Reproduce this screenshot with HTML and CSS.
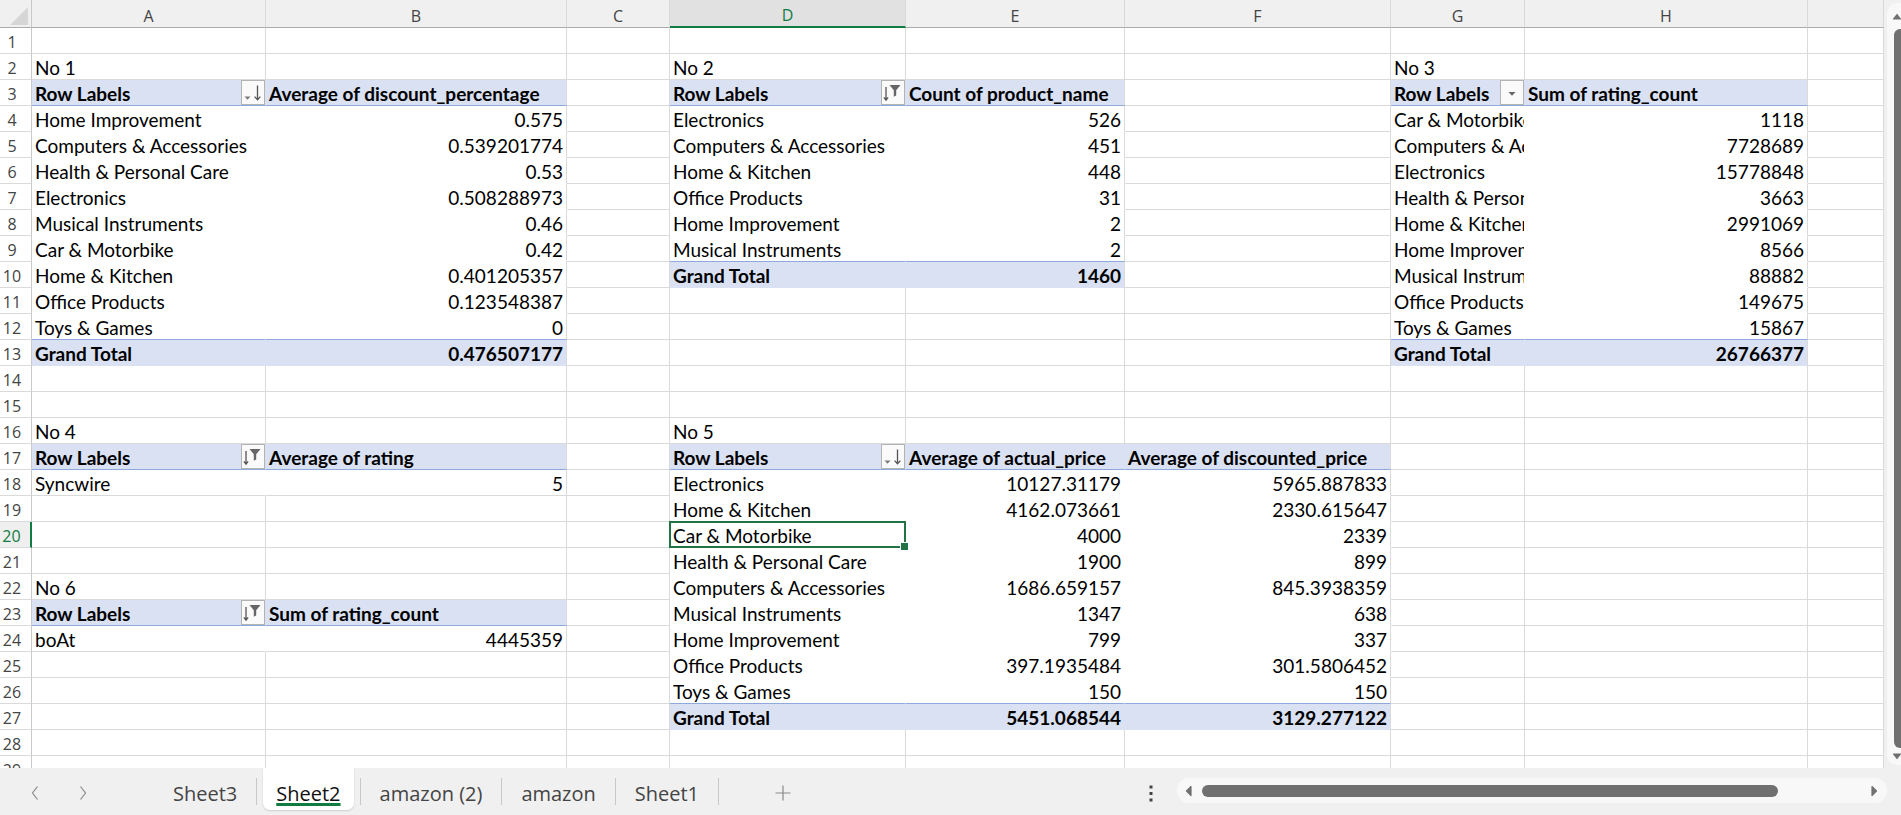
FILE: index.html
```html
<!DOCTYPE html>
<html lang="en">
<head>
<meta charset="utf-8">
<title>Sheet2</title>
<link rel="stylesheet" href="styles.css">
</head>
<body>
<div class="app">
  <div class="sheet">
    <div class="grid">
      <table class="cells">
        <thead>
          <tr>
            <th class="corner"><svg width="31" height="27" viewBox="0 0 31 27"><path d="M10 25H28V7Z" fill="#d6d6d6"/></svg></th>
            <th class="wA">A</th><th class="wB">B</th><th class="wC">C</th><th class="wD cur">D</th><th class="wE">E</th><th class="wF">F</th><th class="wG">G</th><th class="wH">H</th><th class="wI"></th>
          </tr>
        </thead>
        <tbody>
          <tr><th>1</th><td></td><td></td><td></td><td></td><td></td><td></td><td></td><td></td><td></td></tr>
          <tr><th>2</th><td>No 1</td><td></td><td></td><td>No 2</td><td></td><td></td><td>No 3</td><td></td><td></td></tr>
          <tr><th>3</th>
            <td class="h hi rl"><div class="lbl"><span>Row Labels</span><span class="fb"><svg viewBox="0 0 22 23"><path d="M2.5 15.5h6l-3 3.2z" fill="#7a7a7a"/><path d="M15.5 4.5v14M12.6 15.6l2.9 3.1 2.9-3.1" stroke="#555" stroke-width="1.3" fill="none"/></svg></span></div></td>
            <td class="h">Average of discount_percentage</td>
            <td></td>
            <td class="h hi rl"><div class="lbl"><span>Row Labels</span><span class="fb"><svg viewBox="0 0 22 23"><path d="M4 6v13M1.9 16.4l2.1 2.7 2.1-2.7" stroke="#555" stroke-width="1.3" fill="none"/><path d="M7.5 4h11l-4.3 5.2v5.3l-2.4 1.2v-6.5z" fill="#666"/></svg></span></div></td>
            <td class="h">Count of product_name</td>
            <td></td>
            <td class="h hi rl"><div class="lbl"><span>Row Labels</span><span class="fb"><svg viewBox="0 0 22 23"><path d="M7.5 11h7l-3.5 3.8z" fill="#666"/></svg></span></div></td>
            <td class="h">Sum of rating_count</td>
            <td></td>
          </tr>
          <tr><th>4</th><td class="p pi">Home Improvement</td><td class="p n">0.575</td><td></td><td class="p pi">Electronics</td><td class="p n">526</td><td></td><td class="p pi">Car &amp; Motorbike</td><td class="p n">1118</td><td></td></tr>
          <tr><th>5</th><td class="p pi">Computers &amp; Accessories</td><td class="p n">0.539201774</td><td></td><td class="p pi">Computers &amp; Accessories</td><td class="p n">451</td><td></td><td class="p pi">Computers &amp; Accessories</td><td class="p n">7728689</td><td></td></tr>
          <tr><th>6</th><td class="p pi">Health &amp; Personal Care</td><td class="p n">0.53</td><td></td><td class="p pi">Home &amp; Kitchen</td><td class="p n">448</td><td></td><td class="p pi">Electronics</td><td class="p n">15778848</td><td></td></tr>
          <tr><th>7</th><td class="p pi">Electronics</td><td class="p n">0.508288973</td><td></td><td class="p pi">Office Products</td><td class="p n">31</td><td></td><td class="p pi">Health &amp; Personal Care</td><td class="p n">3663</td><td></td></tr>
          <tr><th>8</th><td class="p pi">Musical Instruments</td><td class="p n">0.46</td><td></td><td class="p pi">Home Improvement</td><td class="p n">2</td><td></td><td class="p pi">Home &amp; Kitchen</td><td class="p n">2991069</td><td></td></tr>
          <tr><th>9</th><td class="p pi">Car &amp; Motorbike</td><td class="p n">0.42</td><td></td><td class="p pi pa">Musical Instruments</td><td class="p n pa">2</td><td></td><td class="p pi">Home Improvement</td><td class="p n">8566</td><td></td></tr>
          <tr><th>10</th><td class="p pi">Home &amp; Kitchen</td><td class="p n">0.401205357</td><td></td><td class="g gi">Grand Total</td><td class="g n">1460</td><td></td><td class="p pi">Musical Instruments</td><td class="p n">88882</td><td></td></tr>
          <tr><th>11</th><td class="p pi">Office Products</td><td class="p n">0.123548387</td><td></td><td></td><td></td><td></td><td class="p pi">Office Products</td><td class="p n">149675</td><td></td></tr>
          <tr><th>12</th><td class="p pi pa">Toys &amp; Games</td><td class="p n pa">0</td><td></td><td></td><td></td><td></td><td class="p pi pa">Toys &amp; Games</td><td class="p n pa">15867</td><td></td></tr>
          <tr><th>13</th><td class="g gi">Grand Total</td><td class="g n">0.476507177</td><td></td><td></td><td></td><td></td><td class="g gi">Grand Total</td><td class="g n">26766377</td><td></td></tr>
          <tr><th>14</th><td></td><td></td><td></td><td></td><td></td><td></td><td></td><td></td><td></td></tr>
          <tr><th>15</th><td></td><td></td><td></td><td></td><td></td><td></td><td></td><td></td><td></td></tr>
          <tr><th>16</th><td>No 4</td><td></td><td></td><td>No 5</td><td></td><td></td><td></td><td></td><td></td></tr>
          <tr><th>17</th>
            <td class="h hi rl"><div class="lbl"><span>Row Labels</span><span class="fb"><svg viewBox="0 0 22 23"><path d="M4 6v13M1.9 16.4l2.1 2.7 2.1-2.7" stroke="#555" stroke-width="1.3" fill="none"/><path d="M7.5 4h11l-4.3 5.2v5.3l-2.4 1.2v-6.5z" fill="#666"/></svg></span></div></td>
            <td class="h">Average of rating</td>
            <td></td>
            <td class="h hi rl"><div class="lbl"><span>Row Labels</span><span class="fb"><svg viewBox="0 0 22 23"><path d="M2.5 15.5h6l-3 3.2z" fill="#7a7a7a"/><path d="M15.5 4.5v14M12.6 15.6l2.9 3.1 2.9-3.1" stroke="#555" stroke-width="1.3" fill="none"/></svg></span></div></td>
            <td class="h hi">Average of actual_price</td>
            <td class="h">Average of discounted_price</td>
            <td></td><td></td><td></td>
          </tr>
          <tr><th>18</th><td class="p pi pz">Syncwire</td><td class="p n pz">5</td><td></td><td class="p pi">Electronics</td><td class="p pi n">10127.31179</td><td class="p n">5965.887833</td><td></td><td></td><td></td></tr>
          <tr><th>19</th><td></td><td></td><td></td><td class="p pi">Home &amp; Kitchen</td><td class="p pi n">4162.073661</td><td class="p n">2330.615647</td><td></td><td></td><td></td></tr>
          <tr><th class="currow">20</th><td></td><td></td><td></td><td class="p pi sel">Car &amp; Motorbike</td><td class="p pi n">4000</td><td class="p n">2339</td><td></td><td></td><td></td></tr>
          <tr><th>21</th><td></td><td></td><td></td><td class="p pi">Health &amp; Personal Care</td><td class="p pi n">1900</td><td class="p n">899</td><td></td><td></td><td></td></tr>
          <tr><th>22</th><td>No 6</td><td></td><td></td><td class="p pi">Computers &amp; Accessories</td><td class="p pi n">1686.659157</td><td class="p n">845.3938359</td><td></td><td></td><td></td></tr>
          <tr><th>23</th>
            <td class="h hi rl"><div class="lbl"><span>Row Labels</span><span class="fb"><svg viewBox="0 0 22 23"><path d="M4 6v13M1.9 16.4l2.1 2.7 2.1-2.7" stroke="#555" stroke-width="1.3" fill="none"/><path d="M7.5 4h11l-4.3 5.2v5.3l-2.4 1.2v-6.5z" fill="#666"/></svg></span></div></td>
            <td class="h">Sum of rating_count</td>
            <td></td><td class="p pi">Musical Instruments</td><td class="p pi n">1347</td><td class="p n">638</td><td></td><td></td><td></td>
          </tr>
          <tr><th>24</th><td class="p pi pz">boAt</td><td class="p n pz">4445359</td><td></td><td class="p pi">Home Improvement</td><td class="p pi n">799</td><td class="p n">337</td><td></td><td></td><td></td></tr>
          <tr><th>25</th><td></td><td></td><td></td><td class="p pi">Office Products</td><td class="p pi n">397.1935484</td><td class="p n">301.5806452</td><td></td><td></td><td></td></tr>
          <tr><th>26</th><td></td><td></td><td></td><td class="p pi pa">Toys &amp; Games</td><td class="p pi n pa">150</td><td class="p n pa">150</td><td></td><td></td><td></td></tr>
          <tr><th>27</th><td></td><td></td><td></td><td class="g gi">Grand Total</td><td class="g gi n">5451.068544</td><td class="g n">3129.277122</td><td></td><td></td><td></td></tr>
          <tr><th>28</th><td></td><td></td><td></td><td></td><td></td><td></td><td></td><td></td><td></td></tr>
          <tr><th>29</th><td></td><td></td><td></td><td></td><td></td><td></td><td></td><td></td><td></td></tr>
        </tbody>
      </table>
    </div>
    <div class="vs">
      <div class="vtrack">
        <svg class="varrow up" width="10" height="7" viewBox="0 0 10 7"><path d="M1.5 6L5 1.5 8.5 6Z" fill="#707070" stroke="#707070" stroke-width="1.2" stroke-linejoin="round"/></svg>
        <div class="vthumb"></div>
        <svg class="varrow" width="10" height="7" viewBox="0 0 10 7"><path d="M1.5 1L5 5.5 8.5 1Z" fill="#707070" stroke="#707070" stroke-width="1.2" stroke-linejoin="round"/></svg>
      </div>
    </div>
  </div>
  <div class="tabbar">
    <div class="nav">
      <svg class="chev" width="10" height="16" viewBox="0 0 10 16"><path d="M7.5 1.5L2.5 8l5 6.5" stroke="#8a8a8a" stroke-width="1.2" fill="none"/></svg>
      <svg class="chev r" width="10" height="16" viewBox="0 0 10 16"><path d="M2.5 1.5L7.5 8l-5 6.5" stroke="#8a8a8a" stroke-width="1.2" fill="none"/></svg>
    </div>
    <div class="tabs">
      <div class="tab">Sheet3</div><i class="sep"></i>
      <div class="tab on"><span>Sheet2</span></div><i class="sep"></i>
      <div class="tab">amazon (2)</div><i class="sep"></i>
      <div class="tab">amazon</div><i class="sep"></i>
      <div class="tab">Sheet1</div><i class="sep"></i>
    </div>
    <div class="add"><svg width="16" height="16" viewBox="0 0 16 16"><path d="M8 0.5v15M0.5 8h15" stroke="#8a8a8a" stroke-width="1.2"/></svg></div>
    <div class="fill"></div>
    <div class="dots"><svg width="4" height="17" viewBox="0 0 4 17"><rect x="0.5" y="0.5" width="3" height="3" fill="#444"/><rect x="0.5" y="7" width="3" height="3" fill="#444"/><rect x="0.5" y="13.5" width="3" height="3" fill="#444"/></svg></div>
    <div class="hs">
      <svg class="harrow l" width="7" height="12" viewBox="0 0 7 12"><path d="M6 1.5L1.5 6 6 10.5Z" fill="#707070" stroke="#707070" stroke-width="1.2" stroke-linejoin="round"/></svg>
      <div class="hthumb"></div>
      <div class="fill"></div>
      <svg class="harrow r" width="7" height="12" viewBox="0 0 7 12"><path d="M1 1.5L5.5 6 1 10.5Z" fill="#707070" stroke="#707070" stroke-width="1.2" stroke-linejoin="round"/></svg>
    </div>
    <div class="endpad"></div>
  </div>
</div>
</body>
</html>
```
FILE: styles.css
```css
:root {
  --grid: #dadada;
  --pv: #d9e1f2;
  --pvline: #8ea9db;
  --green: #107c41;
  --sel: #217346;
}
* { box-sizing: border-box; }
html, body { margin: 0; padding: 0; }
body {
  width: 1901px;
  height: 815px;
  overflow: hidden;
  background: #f0f0f0;
  font-family: Lato, "Liberation Sans", sans-serif;
}
.app {
  display: flex;
  flex-direction: column;
  width: 1901px;
  height: 815px;
}
.sheet {
  display: flex;
  flex: none;
  height: 768px;
}
.grid {
  flex: none;
  width: 1884px;
  height: 768px;
  overflow: hidden;
  background: #fff;
}
table.cells {
  border-collapse: separate;
  border-spacing: 0;
  table-layout: fixed;
  width: 1884px;
}
.cells th {
  font-family: "Open Sans", sans-serif;
  font-weight: 400;
  font-size: 16px;
  color: #444;
  padding: 0;
}
.cells thead th {
  height: 28px;
  background: #f0f0f0;
  border-right: 1px solid #d9d9d9;
  border-bottom: 1px solid #ababab;
  line-height: 21px;
  vertical-align: bottom;
  text-align: center;
}
.cells thead th.corner { width: 32px; border-right-color: #c8c8c8; vertical-align: top; line-height: 0; text-align: left; }
.cells thead th.wA { width: 234px; }
.cells thead th.wB { width: 301px; }
.cells thead th.wC { width: 103px; }
.cells thead th.wD { width: 236px; }
.cells thead th.wE { width: 219px; }
.cells thead th.wF { width: 266px; }
.cells thead th.wG { width: 134px; }
.cells thead th.wH { width: 283px; }
.cells thead th.wI { width: 76px; }
.cells thead th.cur {
  background: #e1e1e1;
  color: var(--green);
  border-bottom: 2px solid var(--green);
}
.cells tbody th {
  height: 26px;
  background: #fff;
  border-right: 1px solid #c8c8c8;
  border-bottom: 1px solid var(--grid);
  line-height: 22px;
  vertical-align: bottom;
  text-align: center;
  padding-right: 7px;
}
.cells tbody th.currow {
  color: var(--green);
  background: #efefef;
  border-right: 2px solid var(--green);
}
.cells td {
  height: 26px;
  padding: 0 3px;
  border-right: 1px solid var(--grid);
  border-bottom: 1px solid var(--grid);
  white-space: nowrap;
  overflow: hidden;
  vertical-align: bottom;
  line-height: 22px;
  font-size: 19px;
  color: #000;
}
.cells td.n { text-align: right; }
.cells td.p { background: #fff; border-bottom-color: #fff; }
.cells td.pi { border-right-color: #fff; }
.cells td.pa { border-bottom-color: var(--pvline); }
.cells td.pz { border-bottom-color: var(--grid); }
.cells td.h { background: var(--pv); font-weight: 700; border-bottom-color: var(--pvline); }
.cells td.hi { border-right-color: var(--pv); }
.cells td.g { background: var(--pv); font-weight: 700; border-bottom-color: var(--pv); }
.cells td.gi { border-right-color: var(--pv); }
.cells td.rl { padding-right: 0; }
.lbl {
  display: flex;
  align-items: flex-end;
  justify-content: space-between;
  height: 25px;
}
.fb {
  flex: none;
  display: flex;
  width: 24px;
  height: 25px;
  border: 1px solid #b3b3b3;
  background: #fafafa;
}
.fb svg { width: 22px; height: 23px; }
.cells td.sel { position: relative; overflow: visible; }
.cells td.sel::after {
  content: "";
  position: absolute;
  left: -1px;
  top: -1px;
  right: -1px;
  bottom: -1px;
  border: 2px solid var(--sel);
}
.cells td.sel::before {
  content: "";
  position: absolute;
  right: -4px;
  bottom: -4px;
  width: 7px;
  height: 7px;
  background: var(--sel);
  border: 1px solid #fff;
  z-index: 1;
}

/* vertical scrollbar */
.vs {
  flex: none;
  width: 17px;
  height: 768px;
  overflow: hidden;
  background: #f0f0f0;
  padding-left: 3px;
}
.vtrack {
  display: flex;
  flex-direction: column;
  width: 22px;
  height: 762px;
  margin-top: 3px;
  background: #f8f8f8;
  border-radius: 10px;
}
.varrow { flex: none; margin-left: 5px; }
.varrow.up { margin-top: 10px; }
.vthumb {
  flex: none;
  width: 12px;
  height: 719px;
  margin: 9px 0 5px 7px;
  background: #707070;
  border-radius: 6px;
}

/* sheet tabs bar */
.tabbar {
  display: flex;
  flex: none;
  height: 47px;
  background: #f0f0f0;
  font-family: "Open Sans", sans-serif;
}
.nav {
  flex: none;
  display: flex;
  align-items: center;
  width: 154px;
  padding-top: 3px;
}
.chev { margin-left: 30px; }
.chev.r { margin-left: 38px; }
.tabs {
  flex: none;
  display: flex;
  width: 606px;
}
.tab {
  height: 42px;
  padding: 10px 19px 0;
  line-height: 32px;
  font-size: 20px;
  color: #444;
  white-space: nowrap;
}
.tab.on {
  margin: 0 6px;
  padding: 10px 13px 0;
  background: #fff;
  color: #111;
  border-radius: 0 0 7px 7px;
  box-shadow: 0 1px 2px rgba(0, 0, 0, 0.14);
}
.tab.on span {
  text-decoration: underline 3px var(--green);
  text-underline-offset: 1.5px;
}
.sep {
  flex: none;
  width: 1px;
  height: 27px;
  margin-top: 10px;
  background: #c8c8c8;
}
.add {
  flex: none;
  display: flex;
  align-items: center;
  justify-content: center;
  width: 46px;
  padding-top: 3px;
}
.fill { flex: 1; }
.dots {
  flex: none;
  display: flex;
  align-items: center;
  justify-content: center;
  width: 22px;
  padding-top: 3px;
}
.hs {
  flex: none;
  display: flex;
  align-items: center;
  width: 710px;
  height: 25px;
  margin: 10px 0 0 15px;
  background: #f8f8f8;
  border-radius: 12px;
}
.harrow.l { margin-left: 8px; }
.harrow.r { margin-right: 9px; }
.hthumb {
  flex: none;
  width: 576px;
  height: 12px;
  margin-left: 10px;
  background: #707070;
  border-radius: 6px;
}
.endpad { flex: none; width: 14px; }
```
